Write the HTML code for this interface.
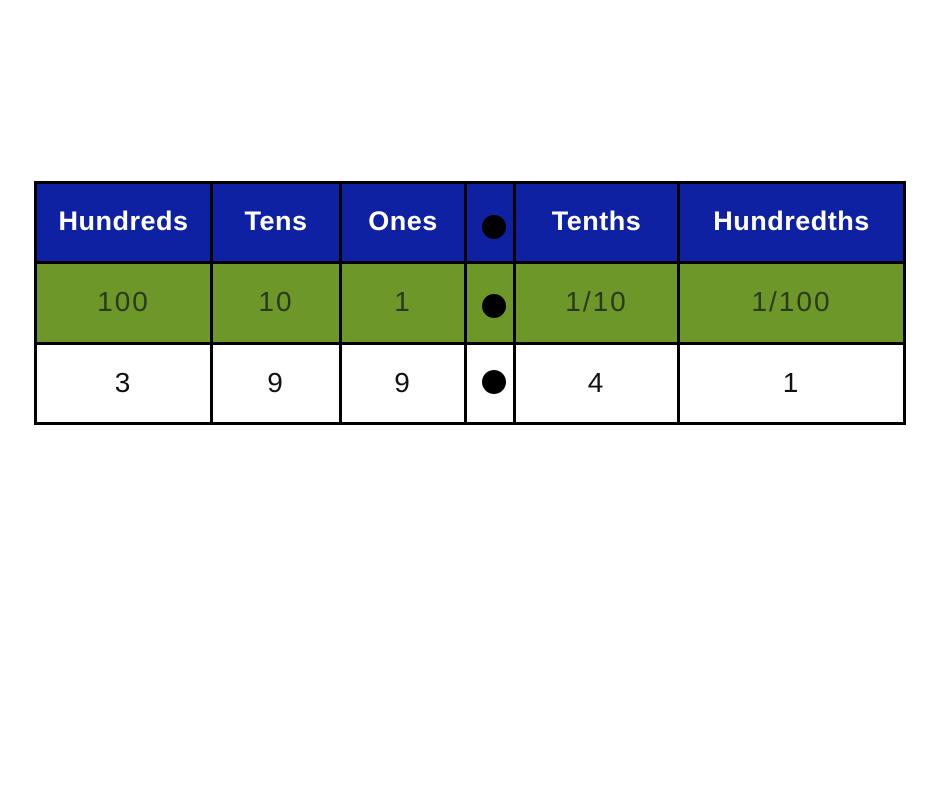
<!DOCTYPE html>
<html><head><style>
body{margin:0;width:940px;height:788px;background:#fff;position:relative;overflow:hidden;font-family:"Liberation Sans",sans-serif}
.r{position:absolute;left:34px;width:872px}
.l{position:absolute;background:#000}
.t{position:absolute;text-align:center;font-size:27px}
.d{position:absolute;width:24px;height:24px;border-radius:50%;background:#000}
.n .t{font-size:28px;letter-spacing:2px}
</style></head><body>
<div class="r" style="top:181px;height:82px;background:#0f21a3"></div>
<div class="r" style="top:263px;height:81px;background:#6e972a"></div>
<div class="l" style="left:34px;top:181px;width:872px;height:3px"></div>
<div class="l" style="left:34px;top:261px;width:872px;height:3px"></div>
<div class="l" style="left:34px;top:342px;width:872px;height:3px"></div>
<div class="l" style="left:34px;top:422px;width:872px;height:3px"></div>
<div class="l" style="left:34px;top:181px;width:3px;height:244px"></div>
<div class="l" style="left:210px;top:181px;width:3px;height:244px"></div>
<div class="l" style="left:339px;top:181px;width:3px;height:244px"></div>
<div class="l" style="left:464px;top:181px;width:3px;height:244px"></div>
<div class="l" style="left:513px;top:181px;width:3px;height:244px"></div>
<div class="l" style="left:677px;top:181px;width:3px;height:244px"></div>
<div class="l" style="left:903px;top:181px;width:3px;height:244px"></div>
<div class="d" style="left:482px;top:215px"></div>
<div class="d" style="left:482px;top:294px"></div>
<div class="d" style="left:482px;top:370px"></div>
<div style="color:#fff;font-weight:bold">
<div class="t" style="left:37px;width:173px;top:206px;letter-spacing:0.5px">Hundreds</div>
<div class="t" style="left:213px;width:126px;top:206px;letter-spacing:0.5px">Tens</div>
<div class="t" style="left:342px;width:122px;top:206px;letter-spacing:0.5px">Ones</div>
<div class="t" style="left:516px;width:161px;top:206px;letter-spacing:0.5px">Tenths</div>
<div class="t" style="left:680px;width:223px;top:206px;letter-spacing:0.5px">Hundredths</div>
</div>
<div class="n" style="color:#2a3a18">
<div class="t" style="left:37px;width:173px;top:286px">100</div>
<div class="t" style="left:213px;width:126px;top:286px">10</div>
<div class="t" style="left:342px;width:122px;top:286px">1</div>
<div class="t" style="left:516px;width:161px;top:286px">1/10</div>
<div class="t" style="left:680px;width:223px;top:286px">1/100</div>
</div>
<div class="n" style="color:#111">
<div class="t" style="left:37px;width:173px;top:367px">3</div>
<div class="t" style="left:213px;width:126px;top:367px">9</div>
<div class="t" style="left:342px;width:122px;top:367px">9</div>
<div class="t" style="left:516px;width:161px;top:367px">4</div>
<div class="t" style="left:680px;width:223px;top:367px">1</div>
</div>
</body></html>
